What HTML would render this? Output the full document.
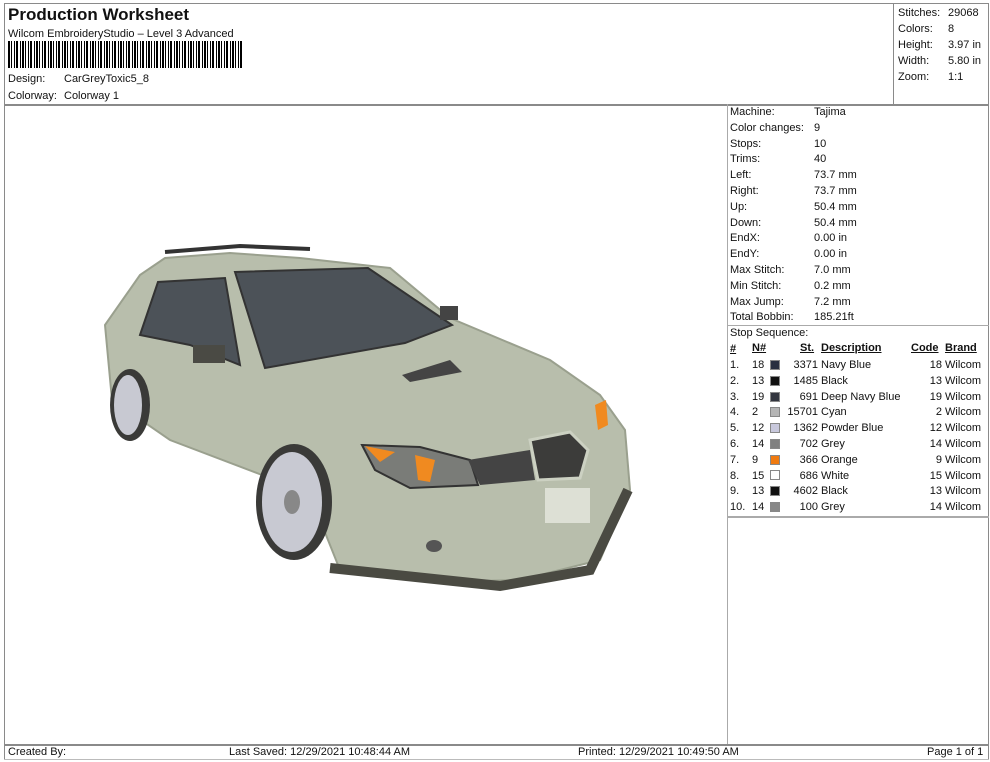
<!DOCTYPE html>
<html><head><meta charset="utf-8"><style>
*{margin:0;padding:0;box-sizing:border-box}
body{width:990px;height:762px;background:#fff;position:relative;overflow:hidden;font-family:"Liberation Sans",Arial,sans-serif;color:#111;font-size:11px}
.a{position:absolute;white-space:nowrap}
.ln{position:absolute;background:#8a8a8a}
.r{position:absolute;left:730px;font-size:11px}
.v{position:absolute;left:814px}
.sq{position:absolute;width:10px;height:10px;border:1px solid #888}
u{text-decoration:underline}
</style></head><body>
<!-- frame lines -->
<div class="ln" style="left:4px;top:3px;width:985px;height:1px"></div>
<div class="ln" style="left:4px;top:3px;width:1px;height:757px"></div>
<div class="ln" style="left:988px;top:3px;width:1px;height:757px"></div>
<div class="ln" style="left:4px;top:104px;width:985px;height:2px"></div>
<div class="ln" style="left:893px;top:3px;width:1px;height:101px"></div>
<div class="ln" style="left:727px;top:104px;width:1px;height:641px;background:#aaa"></div>
<div class="ln" style="left:727px;top:325px;width:262px;height:1px;background:#aaa"></div>
<div class="ln" style="left:727px;top:516px;width:262px;height:2px;background:#aaa"></div>
<div class="ln" style="left:4px;top:744px;width:985px;height:2px"></div>
<div class="ln" style="left:4px;top:759px;width:985px;height:1px;background:#bbb"></div>

<div class="a" style="left:8px;top:5px;font-size:17px;font-weight:bold">Production Worksheet</div>
<div class="a" style="left:8px;top:28px">Wilcom EmbroideryStudio – Level 3 Advanced</div>
<div class="a" style="left:8px;top:41px;width:235px;height:27px;background:repeating-linear-gradient(90deg,#000 0 2px,#fff 2px 3px,#000 3px 4px,#fff 4px 6px,#000 6px 7px,#fff 7px 8px,#000 8px 10px,#fff 10px 12px,#000 12px 13px,#fff 13px 14px)"></div>
<div class="a" style="left:8px;top:73px">Design:</div><div class="a" style="left:64px;top:73px">CarGreyToxic5_8</div>
<div class="a" style="left:8px;top:90px">Colorway:</div><div class="a" style="left:64px;top:90px">Colorway 1</div>

<div class="a" style="left:898px;top:5px;line-height:16px">Stitches:<br>Colors:<br>Height:<br>Width:<br>Zoom:</div>
<div class="a" style="left:948px;top:5px;line-height:16px">29068<br>8<br>3.97 in<br>5.80 in<br>1:1</div>

<div class="a" style="left:730px;top:105px;line-height:15.8px">Machine:<br>Color changes:<br>Stops:<br>Trims:<br>Left:<br>Right:<br>Up:<br>Down:<br>EndX:<br>EndY:<br>Max Stitch:<br>Min Stitch:<br>Max Jump:<br>Total Bobbin:<br>Stop Sequence:</div>
<div class="a" style="left:814px;top:105px;line-height:15.8px">Tajima<br>9<br>10<br>40<br>73.7 mm<br>73.7 mm<br>50.4 mm<br>50.4 mm<br>0.00 in<br>0.00 in<br>7.0 mm<br>0.2 mm<br>7.2 mm<br>185.21ft</div>

<div class="a" style="left:730px;top:342px;line-height:15.8px;font-weight:bold"><u>#</u></div>
<div class="a" style="left:752px;top:342px;font-weight:bold"><u>N#</u></div>
<div class="a" style="left:800px;top:342px;font-weight:bold"><u>St.</u></div>
<div class="a" style="left:821px;top:342px;font-weight:bold"><u>Description</u></div>
<div class="a" style="left:911px;top:342px;font-weight:bold"><u>Code</u></div>
<div class="a" style="left:945px;top:342px;font-weight:bold"><u>Brand</u></div>
<div class="a" style="left:730px;top:358px;line-height:15.8px">1.<br>2.<br>3.<br>4.<br>5.<br>6.<br>7.<br>8.<br>9.<br>10.</div>
<div class="a" style="left:752px;top:358px;line-height:15.8px">18<br>13<br>19<br>2<br>12<br>14<br>9<br>15<br>13<br>14</div>
<div class="a" style="left:784px;top:358px;line-height:15.8px;text-align:right;width:34px">3371<br>1485<br>691<br>15701<br>1362<br>702<br>366<br>686<br>4602<br>100</div>
<div class="a" style="left:821px;top:358px;line-height:15.8px">Navy Blue<br>Black<br>Deep Navy Blue<br>Cyan<br>Powder Blue<br>Grey<br>Orange<br>White<br>Black<br>Grey</div>
<div class="a" style="left:905px;top:358px;line-height:15.8px;text-align:right;width:37px">18<br>13<br>19<br>2<br>12<br>14<br>9<br>15<br>13<br>14</div>
<div class="a" style="left:945px;top:358px;line-height:15.8px">Wilcom<br>Wilcom<br>Wilcom<br>Wilcom<br>Wilcom<br>Wilcom<br>Wilcom<br>Wilcom<br>Wilcom<br>Wilcom</div>
<div class="sq" style="left:770px;top:360px;background:#2a3040"></div>
<div class="sq" style="left:770px;top:376px;background:#111"></div>
<div class="sq" style="left:770px;top:392px;background:#33363f"></div>
<div class="sq" style="left:770px;top:407px;background:#b5b5b5"></div>
<div class="sq" style="left:770px;top:423px;background:#c8c8dc"></div>
<div class="sq" style="left:770px;top:439px;background:#808080"></div>
<div class="sq" style="left:770px;top:455px;background:#f07a10"></div>
<div class="sq" style="left:770px;top:470px;background:#fff"></div>
<div class="sq" style="left:770px;top:486px;background:#111"></div>
<div class="sq" style="left:770px;top:502px;background:#888"></div>

<div class="a" style="left:8px;top:746px;font-size:11px">Created By:</div>
<div class="a" style="left:229px;top:746px">Last Saved: 12/29/2021 10:48:44 AM</div>
<div class="a" style="left:578px;top:746px">Printed: 12/29/2021 10:49:50 AM</div>
<div class="a" style="left:927px;top:746px">Page 1 of 1</div>

<svg class="a" style="left:0;top:0" width="727" height="744" viewBox="0 0 727 744">
<path d="M105,325 L140,275 L165,258 L230,253 L300,258 L390,268 L450,318 L550,360 L600,395 L625,430 L630,490 L600,560 L520,580 L440,582 L340,570 L320,520 L270,478 L170,440 L112,400 Z" fill="#b8beac" stroke="#9aa08e" stroke-width="2"/>
<path d="M165,252 L240,246 L310,249" stroke="#333" stroke-width="4" fill="none"/>
<path d="M235,272 L368,268 L452,325 L405,343 L265,368 Z" fill="#4c5258" stroke="#333" stroke-width="2"/>
<path d="M140,335 L158,282 L225,278 L240,365 L190,345 Z" fill="#4c5258" stroke="#333" stroke-width="2"/>
<rect x="193" y="345" width="32" height="18" fill="#4a4a44"/>
<rect x="440" y="306" width="18" height="14" fill="#444"/>
<path d="M402,375 L450,360 L462,372 L410,382 Z" fill="#444"/>
<path d="M330,568 L500,586 L590,570 L628,490" stroke="#4a4a42" stroke-width="10" fill="none"/>
<ellipse cx="130" cy="405" rx="20" ry="36" fill="#3a3a38"/>
<ellipse cx="128" cy="405" rx="14" ry="30" fill="#c8c9d2"/>
<ellipse cx="294" cy="502" rx="38" ry="58" fill="#3a3a38"/>
<ellipse cx="292" cy="502" rx="30" ry="50" fill="#c8c9d2"/>
<ellipse cx="292" cy="502" rx="8" ry="12" fill="#888"/>
<path d="M362,445 L420,447 L470,460 L478,485 L410,488 L375,470 Z" fill="#7a7c78" stroke="#333" stroke-width="2"/>
<path d="M365,446 L395,452 L380,462 Z M415,455 L435,460 L430,482 L418,480 Z" fill="#f08a20"/>
<path d="M468,460 L530,450 L535,480 L480,485 Z" fill="#444"/>
<path d="M530,440 L570,432 L588,450 L580,478 L538,480 Z" fill="#3c3c3a" stroke="#ccd1c2" stroke-width="3"/>
<path d="M595,405 L606,400 L608,425 L598,430 Z" fill="#f08a20"/>
<rect x="545" y="488" width="45" height="35" fill="#dde0d5"/>
<ellipse cx="434" cy="546" rx="8" ry="6" fill="#555"/>
</svg>
</body></html>
